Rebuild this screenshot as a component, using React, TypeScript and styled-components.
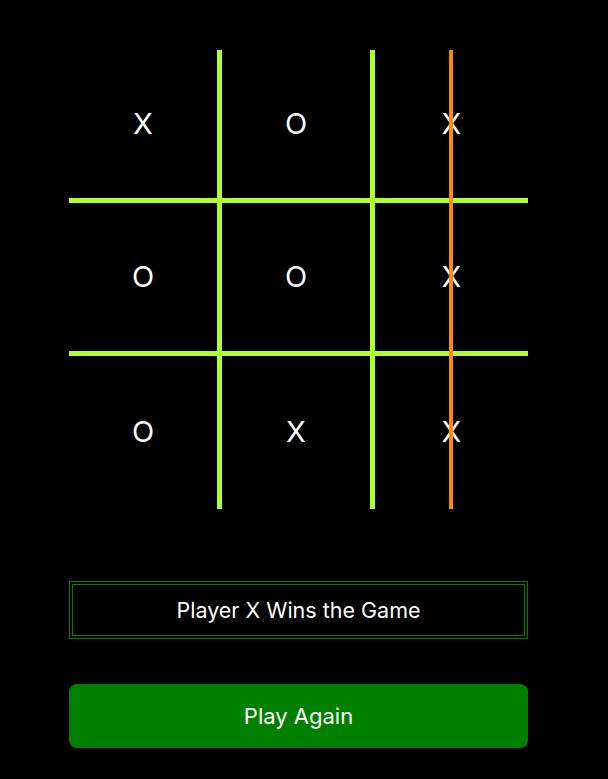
import styled, { createGlobalStyle } from 'styled-components'

const GlobalStyle = createGlobalStyle`
    html, body {
        margin: 0;
        padding: 0;
        background: #000;
        color: #fff;
        font-family: Inter, "Noto Sans", sans-serif;
    }
`

const Page = styled.div`
    width: 459px;
    padding: 50px 0 30px 69px;
    display: flex;
    flex-direction: column;
`

const Board = styled.div`
    position: relative;
    display: grid;
    grid-template-columns: repeat(3, 153px);
    grid-template-rows: repeat(3, 153px);
`

const Cell = styled.div<{ $right: boolean; $bottom: boolean }>`
    display: flex;
    align-items: center;
    justify-content: center;
    font-size: 29px;
    line-height: 1;
    padding-bottom: 2px;
    color: #fff;
    border-right: ${({ $right }) => ($right ? '5px solid #adff2f' : 'none')};
    border-bottom: ${({ $bottom }) => ($bottom ? '5px solid #adff2f' : 'none')};
`

const WinLine = styled.div`
    position: absolute;
    top: 0;
    bottom: 0;
    left: 380px;
    width: 4px;
    background: #ff8c00;
`

const Status = styled.div`
    margin-top: 72px;
    height: 50px;
    border: 4px double #008000;
    display: flex;
    align-items: center;
    justify-content: center;
    font-size: 21.5px;
`

const PlayButton = styled.button`
    margin-top: 45px;
    height: 64px;
    border: none;
    border-radius: 8px;
    background: #008000;
    color: #fff;
    font-family: Inter, "Noto Sans", sans-serif;
    font-size: 22px;
    cursor: pointer;
`

const board = ['X', 'O', 'X', 'O', 'O', 'X', 'O', 'X', 'X']

export default function App() {
    return (
        <>
            <GlobalStyle />
            <Page>
                <Board>
                    {board.map((v, i) => (
                        <Cell key={i} $right={i % 3 !== 2} $bottom={i < 6}>{v}</Cell>
                    ))}
                    <WinLine />
                </Board>
                <Status>Player X Wins the Game</Status>
                <PlayButton>Play Again</PlayButton>
            </Page>
        </>
    )
}
